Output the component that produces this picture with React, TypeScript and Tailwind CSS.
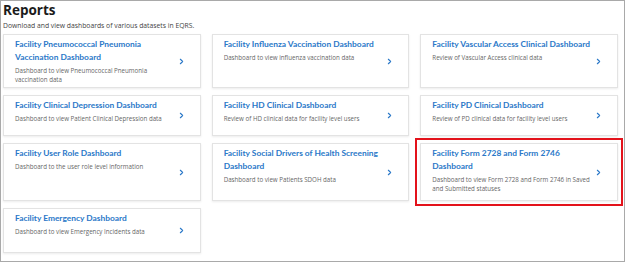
import { ChevronRight } from "lucide-react";

type Report = { title: string; desc: string; highlight?: boolean };

const reports: Report[] = [
  {
    title: "Facility Pneumococcal Pneumonia Vaccination Dashboard",
    desc: "Dashboard to view Pneumococcal Pneumonia vaccination data",
  },
  {
    title: "Facility Influenza Vaccination Dashboard",
    desc: "Dashboard to view influenza vaccination data",
  },
  {
    title: "Facility Vascular Access Clinical Dashboard",
    desc: "Review of Vascular Access clinical data",
  },
  {
    title: "Facility Clinical Depression Dashboard",
    desc: "Dashboard to view Patient Clinical Depression data",
  },
  {
    title: "Facility HD Clinical Dashboard",
    desc: "Review of HD clinical data for facility level users",
  },
  {
    title: "Facility PD Clinical Dashboard",
    desc: "Review of PD clinical data for facility level users",
  },
  {
    title: "Facility User Role Dashboard",
    desc: "Dashboard to the user role level information",
  },
  {
    title: "Facility Social Drivers of Health Screening Dashboard",
    desc: "Dashboard to view Patients SDOH data",
  },
  {
    title: "Facility Form 2728 and Form 2746 Dashboard",
    desc: "Dashboard to view Form 2728 and Form 2746 in Saved and Submitted statuses",
    highlight: true,
  },
  {
    title: "Facility Emergency Dashboard",
    desc: "Dashboard to view Emergency Incidents data",
  },
];

function ReportCard({ r }: { r: Report }) {
  return (
    <div
      className={
        "flex items-center justify-between bg-white border border-[#e3e3e3] shadow-[0_1px_2px_rgba(0,0,0,0.08)] pl-[11px] pr-[14px] " +
        (r.highlight ? "outline-2 outline-[#e3121b] outline-offset-[3px]" : "")
      }
    >
      <div className="self-start pt-[3px] min-w-0 w-[163px]">
        <div className="font-['Lato',sans-serif] text-[8.4px] leading-[13px] font-bold text-[#2a78c8]">
          {r.title}
        </div>
        <div className="mt-[2px] text-[6.2px] leading-[9px] text-[#666]">{r.desc}</div>
      </div>
      <ChevronRight className="w-[9px] h-[9px] text-[#2a78c8] shrink-0" strokeWidth={3} />
    </div>
  );
}

export default function App() {
  return (
    <div
      className="w-[625px] h-[262px] border border-[#a9a9a9] bg-white pl-[2px] pr-[6px] overflow-hidden"
      style={{ fontFamily: '"Open Sans", "Liberation Sans", sans-serif' }}
    >
      <h1 className="text-[13.5px] leading-[17px] font-bold text-[#1b1b1b] mt-[1px]">Reports</h1>
      <p className="text-[6.8px] leading-[10px] text-[#444] mt-[2px]">
        Download and view dashboards of various datasets in EQRS.
      </p>
      <div className="grid grid-cols-3 gap-x-[11px] gap-y-[7px] grid-rows-[54px_41px_58px_45px] mt-[3px]">
        {reports.map((r) => (
          <ReportCard key={r.title} r={r} />
        ))}
      </div>
    </div>
  );
}
